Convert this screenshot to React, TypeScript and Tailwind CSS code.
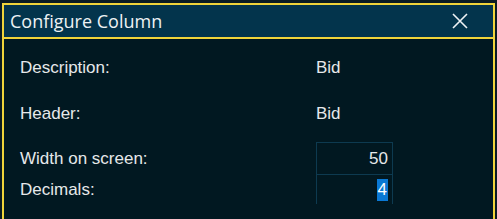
export default function App() {
  const labelFont = { fontFamily: '"Liberation Sans", Arial, sans-serif' };

  return (
    <div className="w-[497px] h-[219px] overflow-hidden bg-[#0b1b23] pt-[3px] px-[2px]">
      <div className="h-full flex flex-col border-2 border-b-0 border-[#f0d43a]">
        {/* Title bar */}
        <div className="h-[34px] shrink-0 flex items-center justify-between bg-[#03344c] border-b-2 border-[#f0d43a] pl-[6px] pr-[25px]">
          <span
            className="text-[18px] text-[#eef2f4] leading-none"
            style={{ fontFamily: '"Open Sans", "Noto Sans", sans-serif' }}
          >
            Configure Column
          </span>
          <svg width="16" height="16" viewBox="0 0 16 16" className="text-[#eef2f4]">
            <path d="M1 1 L15 15 M15 1 L1 15" stroke="currentColor" strokeWidth="1.6" fill="none" />
          </svg>
        </div>

        {/* Body */}
        <div
          className="flex-1 bg-[#011821] pl-[16px] pt-[19px] text-[17px] text-[#e6e8ea]"
          style={labelFont}
        >
          <div className="flex items-center h-[20px]">
            <span className="w-[296px]">Description:</span>
            <span>Bid</span>
          </div>
          <div className="flex items-center h-[20px] mt-[26px]">
            <span className="w-[296px]">Header:</span>
            <span>Bid</span>
          </div>
          <div className="flex items-center mt-[18px]">
            <span className="w-[296px]">Width on screen:</span>
            <div className="w-[77px] h-[33px] border border-[#0d3a50] flex items-center justify-end pr-[4px]">
              50
            </div>
          </div>
          <div className="flex items-center">
            <span className="w-[296px]">Decimals:</span>
            <div className="w-[77px] h-[29px] border-x border-[#0d3a50] flex items-center justify-end pr-[4px]">
              <span className="bg-[#0a78d4] text-white leading-[22px] px-[1px]">4</span>
            </div>
          </div>
        </div>
      </div>
    </div>
  );
}
